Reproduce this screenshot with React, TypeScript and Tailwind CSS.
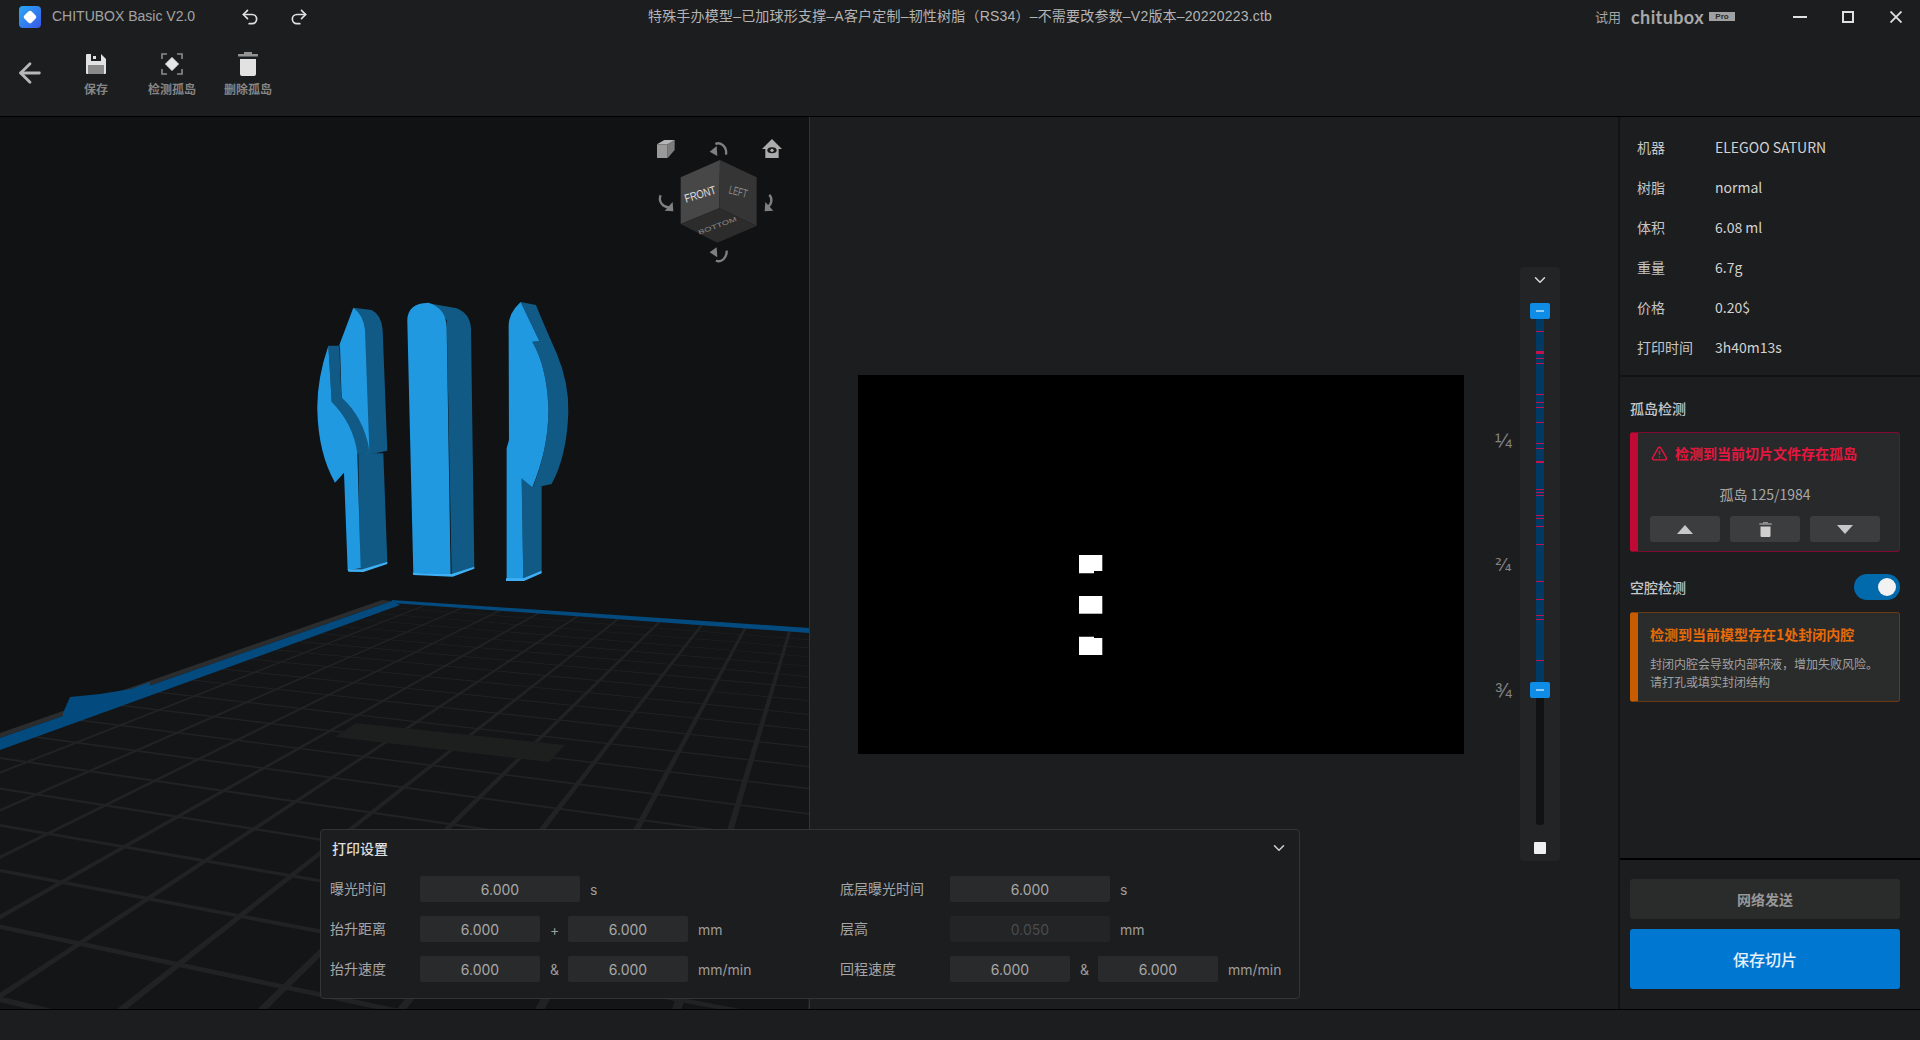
import { ArrowLeft, ChevronDown, Redo2, TriangleAlert, Undo2 } from "lucide-react";

const poly = (pts: number[][]) => pts.map((p) => `${p[0].toFixed(2)},${p[1].toFixed(2)}`).join(" ");

// grid lines are strips that converge on two vanishing points, read off the reference
function gridStrips() {
  const strips: string[] = [];
  const half = 0.035;
  for (let n = -15; n <= 10; n++) {
    const y0 = (k: number) => 423 + 1 / (0.002985 - 0.00025 * k);
    const at = (k: number, x: number) => 376 + ((y0(k) - 376) * (x + 2600)) / 2600;
    strips.push(
      poly([
        [-10, at(n - half, -10)],
        [820, at(n - half, 820)],
        [820, at(n + half, 820)],
        [-10, at(n + half, -10)],
      ]),
    );
  }
  for (let m = 1; m <= 14; m++) {
    const px = (k: number) => -2600 + 1 / (0.000334 - 0.0000039 * k);
    const at = (k: number, y: number) => {
      const x = px(k);
      const py = 571.3 + 0.075 * x;
      return 847 + ((x - 847) * (y - 439)) / (py - 439);
    };
    strips.push(
      poly([
        [at(m - half, 590), 590],
        [at(m + half, 590), 590],
        [at(m + half, 1020), 1020],
        [at(m - half, 1020), 1020],
      ]),
    );
  }
  return strips;
}

function Scene() {
  return (
    <svg className="absolute inset-0 h-[892px] w-[809px]" viewBox="0 117 809 892" aria-hidden>
      <defs>
        <clipPath id="floor">
          <polygon points="392,601 0,740 0,1009 809,1009 809,632" />
        </clipPath>
      </defs>
      <polygon points="392,601 0,740 0,1009 809,1009 809,632" fill="#141517" />
      <g clipPath="url(#floor)" fill="#212224">
        {gridStrips().map((p, i) => (
          <polygon key={i} points={p} />
        ))}
      </g>
      <polygon points="356,723 565,745 549,762 335,737" fill="#1c1f1e" />
      <polygon points="382,600 392,601 0,738 0,733" fill="#2b2c2e" />
      <polygon points="392,601 400,605 0,750 0,738" fill="#034b7f" />
      <polygon points="392,600 809,628 809,633 392,603" fill="#034b7f" />
      <polygon points="70,697 100,694 131,689 150,682 150,692 63,723 63,713" fill="#034b7f" />

      <g transform="translate(300 280) scale(0.3333)">
        {/* left piece */}
        <path d="M160,83 L215,90 Q245,105 248,150 L262,512 L200,525 L170,520 Z" fill="#115a86" />
        <path d="M175,520 L250,520 L262,845 L190,870 L180,865 Z" fill="#115a86" />
        <path d="M160,83 Q190,105 195,150 L208,510 L200,525 Q190,440 125,360 L120,200 L118,195 Z" fill="#2199e1" />
        <path d="M85,197 L118,197 L124,352 Q190,410 208,510 L200,525 L170,520 Q160,430 95,365 Z" fill="#115a86" />
        <path d="M85,197 Q50,300 52,390 Q55,520 105,608 L132,578 L143,870 L182,865 L172,520 Q160,430 95,365 Z" fill="#2199e1" />
        <path d="M143,868 L188,868 L262,845 L262,852 L190,876 L145,875 Z" fill="#3fb0f5" />
        {/* middle piece */}
        <path d="M385,70 L470,85 Q510,100 513,145 L523,862 L455,885 L440,120 Z" fill="#115a86" />
        <path d="M385,68 Q320,70 322,125 L340,880 L452,885 L440,140 Q438,85 385,68 Z" fill="#2199e1" />
        <path d="M338,878 L405,882 L455,882 L523,860 L523,866 L458,890 L340,885 Z" fill="#3fb0f5" />
        {/* right piece */}
        <path d="M662,66 L708,75 Q730,130 770,220 Q808,310 805,400 Q800,530 755,612 L697,625 Q748,500 745,380 Q740,260 697,185 L718,183 Z" fill="#115a86" />
        <path d="M665,590 L697,622 L725,618 L725,875 L670,900 Z" fill="#115a86" />
        <path d="M662,66 Q625,100 626,140 L627,480 L620,505 L620,900 L670,900 L665,595 L697,622 Q748,500 745,380 Q740,260 697,185 L718,183 Z" fill="#2199e1" />
        <path d="M618,895 L670,895 L725,872 L725,880 L672,903 L618,903 Z" fill="#3fb0f5" />
      </g>

      {/* view cube */}
      <g transform="translate(630 120) scale(0.3333)">
        <polygon points="152,172 270,120 268,265 152,312" fill="#474747" />
        <polygon points="270,120 380,172 380,318 268,265" fill="#353535" />
        <polygon points="152,312 268,265 380,318 262,368" fill="#2c2c2c" />
        <text transform="translate(168 248) rotate(-17) scale(0.8 1)" fontSize="35" fill="#e0e0e0" fontFamily="Liberation Sans">FRONT</text>
        <text transform="translate(295 220) rotate(14) scale(0.65 1)" fontSize="35" fill="#8a8a8a" fontFamily="Liberation Sans">LEFT</text>
        <text transform="translate(208 344) rotate(-20) scale(1.05 0.7)" fontSize="27" fill="#8a8a8a" fontFamily="Liberation Sans">BOTTOM</text>
        <polygon points="81,73 113,73 113,114 81,114" fill="#9a9a9a" />
        <polygon points="113,73 134,60 134,90 113,114" fill="#7c7c7c" />
        <polygon points="81,73 103,60 134,60 113,73" fill="#b5b5b5" />
        <path d="M396,87 L426,57 L456,87 L446,87 L446,114 L406,114 L406,87 Z" fill="#acacac" />
        <ellipse cx="426" cy="91" rx="14" ry="9" fill="#1a1a1a" />
        <circle cx="426" cy="91" r="5" fill="#acacac" />
        <g fill="none" stroke="#808080" strokeWidth="7">
          <path d="M288,104 A24,28 0 0 0 256,72" />
          <path d="M122,262 A28,26 0 0 1 92,226" />
          <path d="M412,262 A28,26 0 0 0 418,224" />
          <path d="M290,392 A24,30 0 0 1 258,422" />
        </g>
        <g fill="#808080">
          <polygon points="239,95 260,78 262,108" />
          <polygon points="130,274 104,272 128,246" />
          <polygon points="404,274 430,272 406,246" />
          <polygon points="239,397 260,382 262,412" />
        </g>
      </g>
    </svg>
  );
}

function SaveIcon() {
  return (
    <svg width="22" height="22" viewBox="0 0 22 22" aria-hidden>
      <path d="M1 2a1 1 0 0 1 1-1h14l5 5v14a1 1 0 0 1-1 1H2a1 1 0 0 1-1-1z" fill="#e2e2e2" />
      <rect x="6" y="1" width="10" height="7" fill="#1c1d1f" />
      <rect x="8" y="3" width="3" height="3" fill="#e2e2e2" />
      <rect x="3" y="12" width="16" height="9" fill="#8a8a8a" />
    </svg>
  );
}

function DetectIcon() {
  return (
    <svg width="22" height="22" viewBox="0 0 22 22" aria-hidden>
      <path d="M1 6V1h5M16 1h5v5M21 16v5h-5M6 21H1v-5" fill="none" stroke="#8c8c8c" strokeWidth="1.6" />
      <path d="M11 4.5 17.5 11 11 17.5 4.5 11z" fill="#e6e6e6" strokeLinejoin="round" stroke="#e6e6e6" />
    </svg>
  );
}

function TrashIcon({ size = 24, color = "#e2e2e2" }: { size?: number; color?: string }) {
  return (
    <svg width={size} height={size} viewBox="0 0 24 24" fill={color} aria-hidden>
      <rect x="8" y="0" width="8" height="2" opacity="0.6" />
      <rect x="2" y="2" width="20" height="2.5" rx="0.5" opacity="0.6" />
      <path d="M4 7h16v15a2 2 0 0 1-2 2H6a2 2 0 0 1-2-2z" />
    </svg>
  );
}

function ToolButton({ label, icon }: { label: string; icon: React.ReactNode }) {
  return (
    <div className="flex w-[76px] flex-col items-center">
      <div className="flex h-[24px] items-center">{icon}</div>
      <span className="mt-[5px] text-[12px] leading-[16px] font-bold text-[#858585]">{label}</span>
    </div>
  );
}

function Header() {
  return (
    <div className="shrink-0 border-b border-black">
      <div className="relative flex h-[33px] items-center">
        <div className="ml-[19px] flex h-[22px] w-[22px] items-center justify-center rounded-[4px] bg-gradient-to-br from-[#26a8f5] to-[#3a56e8]">
          <div className="h-[10px] w-[10px] rotate-45 rounded-[2px] bg-white" />
        </div>
        <span className="ml-[11px] font-['Liberation_Sans',sans-serif] text-[14px] text-[#a3a3a3]">CHITUBOX Basic V2.0</span>
        <Undo2 className="ml-[45px] text-[#e0e0e0]" size={20} strokeWidth={2} />
        <Redo2 className="ml-[29px] text-[#e0e0e0]" size={20} strokeWidth={2} />
        <div className="absolute inset-x-0 text-center font-['Liberation_Sans','Noto_Sans_CJK_SC',sans-serif] text-[14px] leading-[33px] tracking-[0.2px] text-[#b4b4b4]">
          特殊手办模型–已加球形支撑–A客户定制–韧性树脂（RS34）–不需要改参数–V2版本–20220223.ctb
        </div>
        <div className="relative ml-auto flex items-center">
          <span className="text-[13px] text-[#a5a5a5]">试用</span>
          <span className="ml-[10px] font-['Lato',sans-serif] text-[18px] leading-[24px] font-bold tracking-[0.4px] text-[#a8a8a8]">chitubox</span>
          <span className="ml-[5px] flex h-[9px] w-[26px] items-center justify-center bg-[#a0a0a0] font-['Liberation_Sans',sans-serif] text-[8px] font-bold text-[#2a2a2a]">Pro</span>
          <div className="ml-[58px] h-[2px] w-[14px] bg-[#e0e0e0]" />
          <div className="ml-[35px] h-[12px] w-[12px] border-2 border-[#e0e0e0]" />
          <svg className="mr-[18px] ml-[36px]" width="12" height="12" viewBox="0 0 12 12" aria-hidden>
            <path d="M0.5 0.5l11 11M11.5 0.5l-11 11" stroke="#e0e0e0" strokeWidth="1.8" />
          </svg>
        </div>
      </div>
      <div className="flex h-[83px] items-start pt-[19px]">
        <ArrowLeft className="mt-[5px] ml-[14px] text-[#b8b8b8]" size={32} strokeWidth={2.1} />
        <div className="ml-[12px] flex">
          <ToolButton label="保存" icon={<SaveIcon />} />
          <ToolButton label="检测孤岛" icon={<DetectIcon />} />
          <ToolButton label="删除孤岛" icon={<TrashIcon />} />
        </div>
      </div>
    </div>
  );
}

const redMarks = [
  [331, 1], [351, 3], [358, 1], [363, 1], [394, 1], [402, 1], [407, 1], [422, 1], [443, 1], [448, 1], [461, 2],
  [489, 1], [492, 1], [495, 1], [515, 1], [518, 1], [526, 1], [544, 1], [581, 1], [599, 1], [615, 1], [619, 1], [660, 1],
];

function Handle() {
  return (
    <div className="flex h-[16px] w-[20px] items-center justify-center rounded-[2px] bg-[#0f8ce6]">
      <div className="h-[2px] w-[8px] bg-[#8ccbf5]" />
    </div>
  );
}

function LayerSlider() {
  return (
    <div className="relative mt-[150px] ml-[56px] flex h-[594px] w-[40px] flex-col items-center rounded-[4px] bg-[#232426] pt-[4px]">
      <ChevronDown className="text-[#d8d8d8]" size={18} strokeWidth={2} />
      <div className="mt-[14px]">
        <Handle />
      </div>
      <div className="relative h-[363px] w-[8px] bg-[#003a63]">
        {redMarks.map(([y, h]) => (
          <div key={y} className="absolute inset-x-0 bg-[#c2124a]" style={{ top: y - 319, height: h }} />
        ))}
      </div>
      <Handle />
      <div className="h-[127px] w-[8px] rounded-b-[3px] bg-[#111214]" />
      <div className="mt-[17px] h-[12px] w-[12px] rounded-[1px] bg-[#f0f0f0]" />
      <span className="absolute top-[159px] left-[-25px] font-['Liberation_Sans',sans-serif] text-[20px] leading-[28px] text-[#858585]">¼</span>
      <span className="absolute top-[284px] left-[-25px] font-['DejaVu_Sans',sans-serif] text-[17px] leading-[28px] text-[#858585]">²⁄₄</span>
      <span className="absolute top-[409px] left-[-25px] font-['Liberation_Sans',sans-serif] text-[20px] leading-[28px] text-[#858585]">¾</span>
    </div>
  );
}

function SlicePreview() {
  return (
    <div className="mt-[258px] ml-[48px] flex h-[379px] w-[606px] shrink-0 items-start bg-black pt-[180px] pl-[221px]">
      <svg width="24" height="101" viewBox="0 0 24 101" fill="#fff" aria-hidden>
        <path d="M0 0h23.3v16H15v2.3H0z" />
        <rect x="0" y="41" width="23.3" height="17.7" />
        <path d="M0 81.7h15v1.3h8.3v17H0z" />
      </svg>
    </div>
  );
}

function Input({ value, wide, disabled }: { value: string; wide?: boolean; disabled?: boolean }) {
  return (
    <div
      className={`flex h-[26px] items-center justify-center rounded-[2px] font-['Inter',sans-serif] text-[14px] ${wide ? "w-[160px]" : "w-[120px]"} ${
        disabled ? "bg-[#232426] text-[#4a4b4c]" : "bg-[#292a2b] text-[#a8a8a8]"
      }`}
    >
      {value}
    </div>
  );
}

function Unit({ children }: { children: string }) {
  return <span className="ml-[10px] font-['Inter',sans-serif] text-[14px] text-[#9c9c9c]">{children}</span>;
}

function DoubleField({ label, op, unit, labelW }: { label: string; op: string; unit: string; labelW: string }) {
  return (
    <div className="flex h-[26px] items-center">
      <span className={`pb-[2px] text-[14px] text-[#a5a5a5] ${labelW}`}>{label}</span>
      <Input value="6.000" />
      <span className="w-[28px] pl-[10px] font-['Inter',sans-serif] text-[14px] text-[#9c9c9c]">{op}</span>
      <Input value="6.000" />
      <Unit>{unit}</Unit>
    </div>
  );
}

function SingleField({ label, value, unit, labelW, disabled }: { label: string; value: string; unit: string; labelW: string; disabled?: boolean }) {
  return (
    <div className="flex h-[26px] items-center">
      <span className={`pb-[2px] text-[14px] text-[#a5a5a5] ${labelW}`}>{label}</span>
      <Input value={value} wide disabled={disabled} />
      <Unit>{unit}</Unit>
    </div>
  );
}

function PrintSettings() {
  return (
    <div className="absolute top-[712px] left-[320px] h-[170px] w-[980px] rounded-[4px] border border-[#333436] bg-[#1c1d1f] pl-[9px]">
      <div className="flex h-[36px] items-center justify-between pr-[11px] pl-[2px]">
        <span className="text-[14px] font-medium text-[#dedede]">打印设置</span>
        <ChevronDown className="text-[#d0d0d0]" size={18} strokeWidth={2} />
      </div>
      <div className="mt-[10px] flex">
        <div className="flex w-[510px] flex-col gap-[14px]">
          <SingleField label="曝光时间" value="6.000" unit="s" labelW="w-[90px]" />
          <DoubleField label="抬升距离" op="+" unit="mm" labelW="w-[90px]" />
          <DoubleField label="抬升速度" op="&" unit="mm/min" labelW="w-[90px]" />
        </div>
        <div className="flex flex-col gap-[14px]">
          <SingleField label="底层曝光时间" value="6.000" unit="s" labelW="w-[110px]" />
          <SingleField label="层高" value="0.050" unit="mm" labelW="w-[110px]" disabled />
          <DoubleField label="回程速度" op="&" unit="mm/min" labelW="w-[110px]" />
        </div>
      </div>
    </div>
  );
}

const info = [
  ["机器", "ELEGOO SATURN"],
  ["树脂", "normal"],
  ["体积", "6.08 ml"],
  ["重量", "6.7g"],
  ["价格", "0.20$"],
  ["打印时间", "3h40m13s"],
];

function IslandButton({ children }: { children: React.ReactNode }) {
  return <div className="flex h-[26px] w-[70px] items-center justify-center rounded-[3px] bg-[#3c3d3f]">{children}</div>;
}

function RightPanel() {
  return (
    <div className="flex w-[302px] shrink-0 flex-col border-l-2 border-[#121315]">
      <div className="h-[260px] shrink-0 border-b-2 border-[#111214] pt-[10px] pl-[17px]">
        {info.map(([k, v]) => (
          <div key={k} className="flex h-[40px] items-center text-[14px]">
            <span className="w-[78px] text-[#c4c4c4]">{k}</span>
            <span className="text-[#d2d2d2]">{v}</span>
          </div>
        ))}
      </div>

      <div className="flex-1 pt-[21px] pr-[20px] pl-[10px]">
        <div className="h-[20px] text-[14px] leading-[20px] font-medium text-[#c8c8c8]">孤岛检测</div>
        <div className="mt-[14px] h-[120px] rounded-[3px] border border-l-8 border-[#7f0a30] border-l-[#c00a35] bg-[#28292b] pl-[12px]">
          <div className="flex h-[40px] items-center pl-[1px]">
            <TriangleAlert className="text-[#e5173f]" size={17} strokeWidth={2} />
            <span className="ml-[7px] text-[14px] font-bold text-[#e5173f]">检测到当前切片文件存在孤岛</span>
          </div>
          <div className="flex h-[43px] w-[230px] items-center justify-center text-[14px] text-[#a8a8a8]">孤岛 125/1984</div>
          <div className="flex w-[230px] justify-between">
            <IslandButton>
              <div className="h-0 w-0 border-x-[8px] border-b-[9px] border-x-transparent border-b-[#c8c8c8]" />
            </IslandButton>
            <IslandButton>
              <TrashIcon size={15} color="#d0d0d0" />
            </IslandButton>
            <IslandButton>
              <div className="h-0 w-0 border-x-[8px] border-t-[9px] border-x-transparent border-t-[#c8c8c8]" />
            </IslandButton>
          </div>
        </div>

        <div className="mt-[22px] flex h-[26px] items-center justify-between">
          <span className="text-[14px] font-medium text-[#c8c8c8]">空腔检测</span>
          <div className="flex h-[26px] w-[46px] items-center justify-end rounded-full bg-[#006aad] pr-[4px]">
            <div className="h-[18px] w-[18px] rounded-full bg-[#f2f2f2]" />
          </div>
        </div>
        <div className="mt-[12px] h-[90px] rounded-[3px] border border-l-8 border-[#6b3a12] border-l-[#c75b00] bg-[#2a2b2b] pl-[12px]">
          <div className="flex h-[42px] items-center text-[14px] font-bold text-[#e66a0a]">检测到当前模型存在1处封闭内腔</div>
          <p className="text-[12px] leading-[18px] text-[#a0a0a0]">
            封闭内腔会导致内部积液，增加失败风险。
            <br />
            请打孔或填实封闭结构
          </p>
        </div>
      </div>

      <div className="shrink-0 border-t-2 border-black pt-[19px] pr-[20px] pb-[20px] pl-[10px]">
        <div className="flex h-[40px] items-center justify-center rounded-[3px] bg-[#2a2b2b] text-[14px] font-bold text-[#989898]">网络发送</div>
        <div className="mt-[10px] flex h-[60px] items-center justify-center rounded-[3px] bg-[#0078d2] text-[16px] font-medium text-[#e5f0fa]">保存切片</div>
      </div>
    </div>
  );
}

export default function App() {
  return (
    <div className="flex h-screen w-full flex-col overflow-hidden bg-[#1c1d1f] font-['Noto_Sans_CJK_SC',sans-serif]">
      <Header />
      <div className="relative flex h-[892px] shrink-0">
        <div className="relative w-[810px] shrink-0 overflow-hidden border-r border-[#333436] bg-[#111214]">
          <Scene />
        </div>
        <div className="flex flex-1 items-start">
          <SlicePreview />
          <LayerSlider />
        </div>
        <RightPanel />
        <PrintSettings />
      </div>
      <div className="flex-1 border-t border-black" />
    </div>
  );
}
